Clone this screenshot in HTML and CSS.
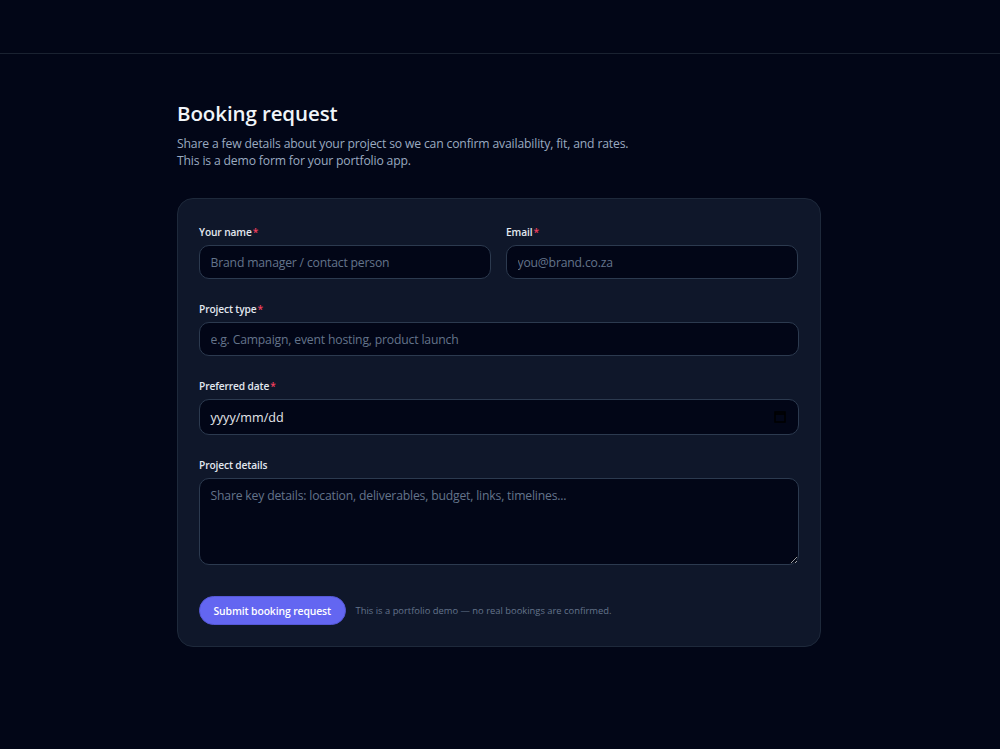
FILE: index.html
```html
<!DOCTYPE html>
<html lang="en">

<head>
    <meta charset="UTF-8">
    <meta name="viewport" content="width=device-width, initial-scale=1.0">
    <title>Booking request</title>
    <link rel="stylesheet" href="styles.css">
</head>

<body>
    <!-- Empty top bar -->
    <header class="topbar"></header>

    <main class="page">
        <h1>Booking request</h1>
        <p class="intro">
            Share a few details about your project so we can confirm availability, fit, and rates.<br>
            This is a demo form for your portfolio app.
        </p>

        <form class="card" onsubmit="return false">
            <div class="row">
                <div class="field">
                    <label for="name">Your name<span class="req">*</span></label>
                    <input type="text" id="name" placeholder="Brand manager / contact person">
                </div>
                <div class="field">
                    <label for="email">Email<span class="req">*</span></label>
                    <input type="email" id="email" placeholder="you@brand.co.za">
                </div>
            </div>

            <div class="field">
                <label for="type">Project type<span class="req">*</span></label>
                <input type="text" id="type" placeholder="e.g. Campaign, event hosting, product launch">
            </div>

            <div class="field">
                <label>Preferred date<span class="req">*</span></label>
                <div class="date-box">
                    <span class="date-value">yyyy/mm/dd</span>
                    <svg class="date-icon" width="12" height="12" viewBox="0 0 12 12" aria-hidden="true">
                        <path d="M1 1h10v10H1zM1 3h10" fill="none" stroke="#000" stroke-width="1.5"></path>
                    </svg>
                </div>
            </div>

            <div class="field">
                <label for="details">Project details</label>
                <textarea id="details" placeholder="Share key details: location, deliverables, budget, links, timelines..."></textarea>
            </div>

            <div class="actions">
                <button type="submit" class="submit">Submit booking request</button>
                <span class="note">This is a portfolio demo — no real bookings are confirmed.</span>
            </div>
        </form>
    </main>
</body>

</html>
```

FILE: styles.css
```css
/* Base styling */
body {
    margin: 0;
    min-height: 100vh;
    background-color: #020617;
    color: #e5e7eb;
    font-family: "Open Sans", "Noto Sans", Arial, sans-serif;
}

.topbar {
    height: 53px;
    border-bottom: 1px solid #1a2231;
}

.page {
    width: 644px;
    margin: 0 auto;
    padding: 45px 2px 0 0;
}

h1 {
    margin: 0 0 8px;
    font-size: 20.5px;
    line-height: 28px;
    font-weight: 600;
    letter-spacing: -0.1px;
    color: #f1f5f9;
}

.intro {
    margin: 0 0 29px;
    font-size: 12.2px;
    line-height: 17px;
    letter-spacing: -0.165px;
    color: #9aaac0;
}

/* Form card */
.card {
    display: flex;
    flex-direction: column;
    gap: 19px;
    padding: 22px 21px 21px;
    background: #0f172a;
    border: 1px solid #1e293b;
    border-radius: 16px;
}

.row {
    display: grid;
    grid-template-columns: 292px 292px;
    column-gap: 15px;
}

.field {
    display: flex;
    flex-direction: column;
    gap: 2px;
}

label {
    font-size: 10.2px;
    line-height: 22px;
    font-weight: 600;
    letter-spacing: -0.12px;
    color: #e2e8f0;
}

.req {
    margin-left: 1px;
    color: #f43f5e;
}

input,
textarea,
.date-box {
    box-sizing: border-box;
    width: 100%;
    background: #020617;
    border: 1px solid #2c3a4f;
    border-radius: 10px;
    color: #e5e7eb;
    font-family: inherit;
    font-size: 12.2px;
    letter-spacing: -0.18px;
    padding: 8px 10.5px;
    outline: none;
}

input {
    height: 34px;
}

textarea {
    display: block;
    height: 87px;
    resize: vertical;
}

input::placeholder,
textarea::placeholder {
    color: #64748b;
    opacity: 1;
}

.date-box {
    display: flex;
    align-items: center;
    justify-content: space-between;
    height: 36px;
    font-size: 12.6px;
    letter-spacing: 0;
}

.date-icon {
    margin-right: 2px;
}

/* Submit row */
.actions {
    display: flex;
    align-items: center;
    gap: 10px;
    margin-top: 12px;
}

.submit {
    height: 29px;
    padding: 0 13.5px;
    background: #6366f1;
    border: 1px solid #5558d6;
    border-radius: 999px;
    color: #fff;
    font-family: inherit;
    font-size: 10.4px;
    font-weight: 600;
    letter-spacing: -0.12px;
    cursor: pointer;
}

.note {
    font-size: 9.4px;
    color: #64748b;
}
```
